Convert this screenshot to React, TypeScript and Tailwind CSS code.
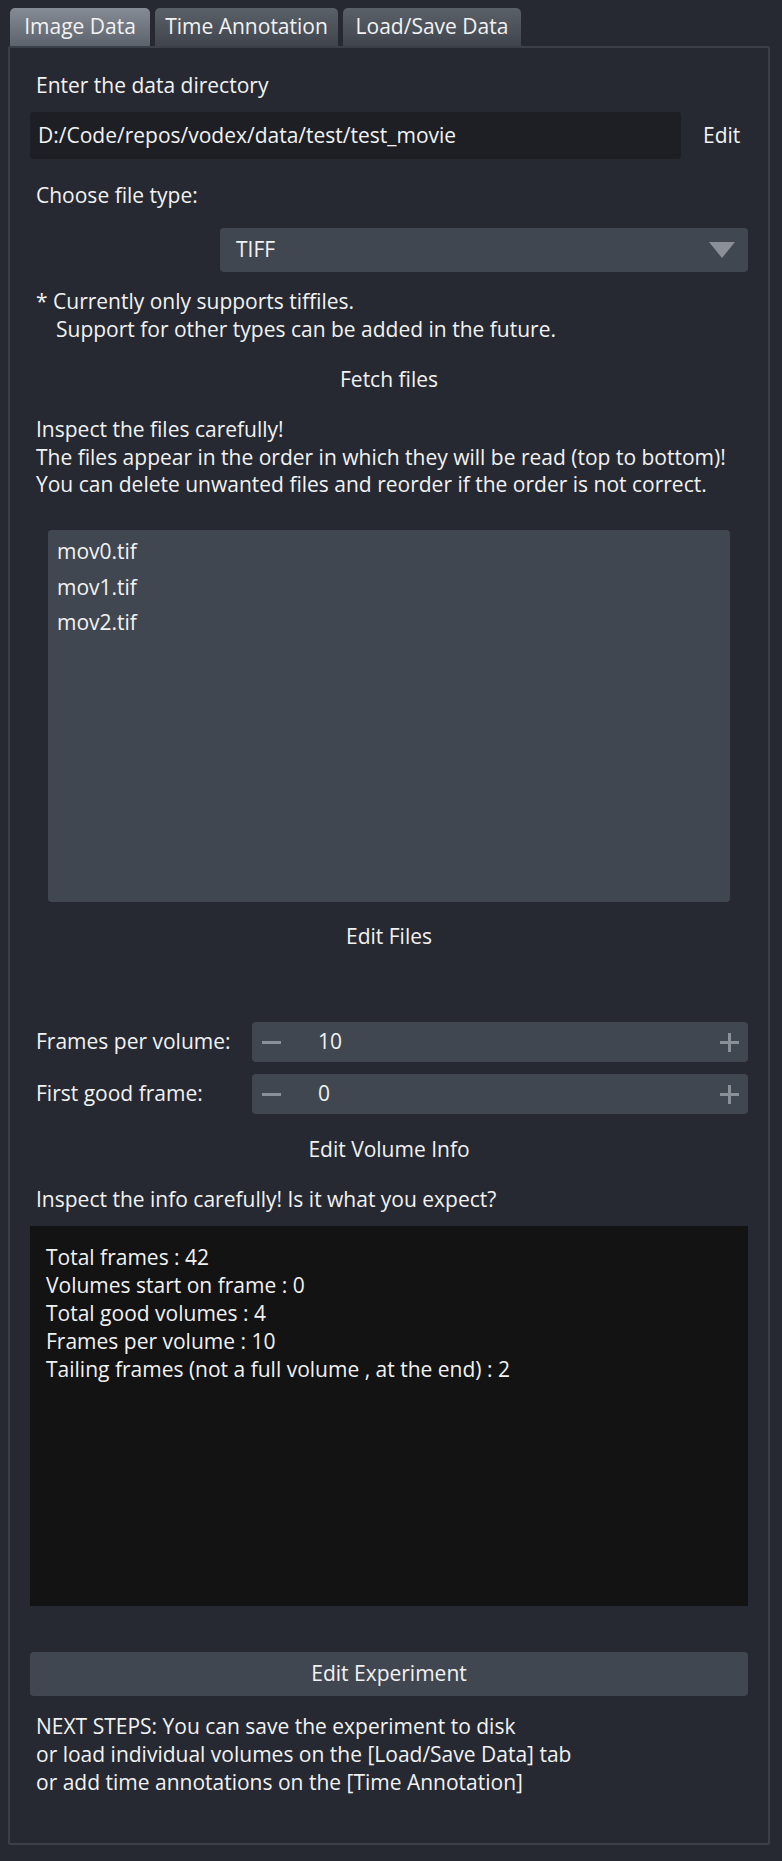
import React from "react";

function Spin({ value }: { value: string }) {
  return (
    <div className="ml-[222px] flex h-[40px] w-[496px] items-center rounded-[4px] bg-[#414751]">
      <div className="ml-[10px] h-[3px] w-[19px] bg-[#8b8f97]" />
      <div className="ml-[37px] flex-1">{value}</div>
      <div className="relative mr-[9px] h-[19px] w-[19px]">
        <div className="absolute left-0 top-[8px] h-[3px] w-[19px] bg-[#8b8f97]" />
        <div className="absolute left-[8px] top-0 h-[19px] w-[3px] bg-[#8b8f97]" />
      </div>
    </div>
  );
}

export default function App() {
  return (
    <div className="min-h-[1861px] w-[782px] bg-[#262931] pt-[8px] font-['Open_Sans',sans-serif] text-[21px] text-[#f2f2f2]">
      <div className="flex h-[38px] gap-[5px] pl-[10px]">
        <div className="flex w-[140px] items-center justify-center rounded-t-[5px] bg-gradient-to-b from-[#868c95] to-[#5d636c]">
          Image Data
        </div>
        <div className="flex w-[183px] items-center justify-center rounded-t-[5px] bg-gradient-to-b from-[#5b6169] to-[#40454d]">
          Time Annotation
        </div>
        <div className="flex w-[178px] items-center justify-center rounded-t-[5px] bg-gradient-to-b from-[#5b6169] to-[#40454d]">
          Load/Save Data
        </div>
      </div>
      <div className="ml-[8px] h-[1799px] w-[762px] rounded-[2px] border-2 border-[#3b3f47] pl-[20px] pr-[20px] pt-[23px]">
        <div className="ml-[6px] h-[28px] leading-[28px]">Enter the data directory</div>
        <div className="mt-[13px] flex h-[47px] items-center">
          <div className="flex h-full w-[651px] items-center rounded-[3px] bg-[#1d1f25] pl-[8px]">
            D:/Code/repos/vodex/data/test/test_movie
          </div>
          <div className="ml-[22px]">Edit</div>
        </div>
        <div className="ml-[6px] mt-[22px] h-[28px] leading-[28px]">Choose file type:</div>
        <div className="ml-[190px] mt-[19px] flex h-[44px] w-[528px] items-center justify-between rounded-[4px] bg-[#414751] pl-[16px] pr-[13px]">
          <span>TIFF</span>
          <svg width="26" height="16" viewBox="0 0 26 16">
            <polygon points="0,0 26,0 13,16" fill="#8b8f97" />
          </svg>
        </div>
        <div className="ml-[6px] mt-[16px] leading-[27.5px]">
          <div>* Currently only supports tiffiles.</div>
          <div className="pl-[20px]">Support for other types can be added in the future.</div>
        </div>
        <div className="mt-[22px] h-[28px] text-center leading-[28px]">Fetch files</div>
        <div className="ml-[6px] mt-[23px] leading-[27.5px]">
          <div>Inspect the files carefully!</div>
          <div>The files appear in the order in which they will be read (top to bottom)!</div>
          <div>You can delete unwanted files and reorder if the order is not correct.</div>
        </div>
        <div className="ml-[18px] mr-[18px] mt-[31.5px] h-[372px] rounded-[4px] bg-[#414751] pl-[9px] pt-[4px]">
          <div className="h-[35.6px] leading-[35.6px]">mov0.tif</div>
          <div className="h-[35.6px] leading-[35.6px]">mov1.tif</div>
          <div className="h-[35.6px] leading-[35.6px]">mov2.tif</div>
        </div>
        <div className="mt-[20px] h-[28px] text-center leading-[28px]">Edit Files</div>
        <div className="mt-[72px] flex h-[40px] items-center">
          <div className="ml-[6px]">Frames per volume:</div>
        </div>
        <div className="-mt-[40px]">
          <Spin value="10" />
        </div>
        <div className="mt-[12px] flex h-[40px] items-center">
          <div className="ml-[6px]">First good frame:</div>
        </div>
        <div className="-mt-[40px]">
          <Spin value="0" />
        </div>
        <div className="mt-[21px] h-[28px] text-center leading-[28px]">Edit Volume Info</div>
        <div className="ml-[6px] mt-[22px] h-[28px] leading-[28px]">
          Inspect the info carefully! Is it what you expect?
        </div>
        <div className="mt-[13px] h-[380px] bg-[#131313] pl-[16px] pt-[17px] leading-[28px]">
          <div>Total frames : 42</div>
          <div>Volumes start on frame : 0</div>
          <div>Total good volumes : 4</div>
          <div>Frames per volume : 10</div>
          <div>Tailing frames (not a full volume , at the end) : 2</div>
        </div>
        <div className="mt-[46px] flex h-[44px] items-center justify-center rounded-[4px] bg-[#414751]">
          Edit Experiment
        </div>
        <div className="ml-[6px] mt-[16px] leading-[28px]">
          <div>NEXT STEPS: You can save the experiment to disk</div>
          <div>or load individual volumes on the [Load/Save Data] tab</div>
          <div>or add time annotations on the [Time Annotation]</div>
        </div>
      </div>
    </div>
  );
}
